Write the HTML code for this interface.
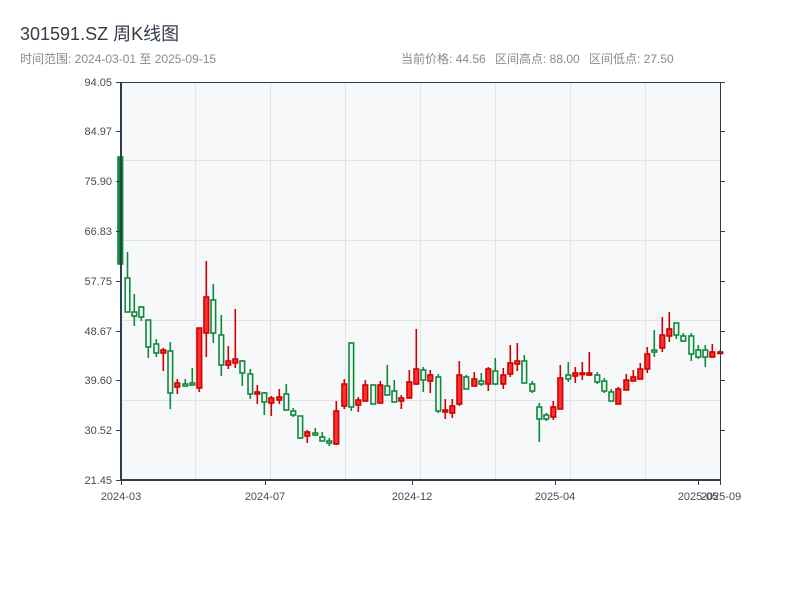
<!DOCTYPE html>
<html><head><meta charset="utf-8"><style>
html,body{margin:0;padding:0;background:#fff;width:800px;height:600px;overflow:hidden}
svg{display:block}
text{font-family:"Liberation Sans","Noto Sans CJK SC",sans-serif}
</style></head><body>
<svg width="800" height="600" xmlns="http://www.w3.org/2000/svg">
<text x="20" y="40" font-size="18" fill="#333d4a">301591.SZ 周K线图</text>
<text x="20" y="63" font-size="12" fill="#8a8a8a">时间范围: 2024-03-01 至 2025-09-15</text>
<text x="401" y="63" font-size="12" fill="#8a8a8a">当前价格: 44.56</text>
<text x="495" y="63" font-size="12" fill="#8a8a8a">区间高点: 88.00</text>
<text x="589" y="63" font-size="12" fill="#8a8a8a">区间低点: 27.50</text>
<rect x="121" y="82" width="599" height="398" fill="#f7f8fa"/>
<g stroke="#e0e3e8" stroke-width="1">
<line x1="195.5" y1="82" x2="195.5" y2="480"/><line x1="270.5" y1="82" x2="270.5" y2="480"/>
<line x1="345.5" y1="82" x2="345.5" y2="480"/><line x1="420.5" y1="82" x2="420.5" y2="480"/>
<line x1="495.5" y1="82" x2="495.5" y2="480"/><line x1="570.5" y1="82" x2="570.5" y2="480"/>
<line x1="645.5" y1="82" x2="645.5" y2="480"/>
<line x1="121" y1="160.5" x2="720" y2="160.5"/><line x1="121" y1="240.5" x2="720" y2="240.5"/>
<line x1="121" y1="320.5" x2="720" y2="320.5"/><line x1="121" y1="400.5" x2="720" y2="400.5"/>
</g>
<g stroke-width="1.6">
<g stroke="#0b8a3b" fill="#f7f8fa">
<line x1="120.3" y1="157" x2="120.3" y2="264"/><rect x="118" y="157" width="4.6" height="107" fill="#0b8a3b"/>
<line x1="127.5" y1="252" x2="127.5" y2="312"/><rect x="125.2" y="278" width="4.6" height="34"/>
<line x1="134.3" y1="294" x2="134.3" y2="326"/><rect x="132" y="312" width="4.6" height="4"/>
<line x1="141.3" y1="306" x2="141.3" y2="321"/><rect x="139" y="307" width="4.6" height="10"/>
<line x1="148.3" y1="320" x2="148.3" y2="358"/><rect x="146" y="320" width="4.6" height="27"/>
<line x1="156.3" y1="339" x2="156.3" y2="357"/><rect x="154" y="344" width="4.6" height="9"/>
<line x1="170.3" y1="342" x2="170.3" y2="409"/><rect x="168" y="351" width="4.6" height="42"/>
<line x1="185.3" y1="379" x2="185.3" y2="386"/><rect x="183" y="384" width="4.6" height="2"/>
<line x1="192.3" y1="368" x2="192.3" y2="385"/><rect x="190" y="383" width="4.6" height="2"/>
<line x1="213.3" y1="284" x2="213.3" y2="343"/><rect x="211" y="300" width="4.6" height="33"/>
<line x1="221.3" y1="315" x2="221.3" y2="376"/><rect x="219" y="335" width="4.6" height="30"/>
<line x1="242.3" y1="360" x2="242.3" y2="386"/><rect x="240" y="361" width="4.6" height="12"/>
<line x1="250.3" y1="369" x2="250.3" y2="399"/><rect x="248" y="374" width="4.6" height="20"/>
<line x1="264.3" y1="392" x2="264.3" y2="415"/><rect x="262" y="393" width="4.6" height="9"/>
<line x1="286.3" y1="384" x2="286.3" y2="410"/><rect x="284" y="394" width="4.6" height="16"/>
<line x1="293.3" y1="408" x2="293.3" y2="417"/><rect x="291" y="411" width="4.6" height="4"/>
<line x1="300.3" y1="416" x2="300.3" y2="439"/><rect x="298" y="416" width="4.6" height="22"/>
<line x1="315.3" y1="428" x2="315.3" y2="436"/><rect x="313" y="433" width="4.6" height="2"/>
<line x1="322.3" y1="432" x2="322.3" y2="441"/><rect x="320" y="437" width="4.6" height="4"/>
<line x1="329.3" y1="438" x2="329.3" y2="446"/><rect x="327" y="441" width="4.6" height="2"/>
<line x1="351.3" y1="343" x2="351.3" y2="411"/><rect x="349" y="343" width="4.6" height="64"/>
<line x1="373.3" y1="385" x2="373.3" y2="404"/><rect x="371" y="385" width="4.6" height="19"/>
<line x1="387.3" y1="365" x2="387.3" y2="395"/><rect x="385" y="386" width="4.6" height="9"/>
<line x1="394.3" y1="380" x2="394.3" y2="402"/><rect x="392" y="391" width="4.6" height="11"/>
<line x1="423.3" y1="367" x2="423.3" y2="392"/><rect x="421" y="370" width="4.6" height="10"/>
<line x1="438.3" y1="374" x2="438.3" y2="413"/><rect x="436" y="377" width="4.6" height="34"/>
<line x1="466.3" y1="375" x2="466.3" y2="389"/><rect x="464" y="377" width="4.6" height="12"/>
<line x1="481.3" y1="373" x2="481.3" y2="386"/><rect x="479" y="381" width="4.6" height="3"/>
<line x1="495.3" y1="358" x2="495.3" y2="385"/><rect x="493" y="371" width="4.6" height="13"/>
<line x1="524.3" y1="355" x2="524.3" y2="383"/><rect x="522" y="361" width="4.6" height="22"/>
<line x1="532.3" y1="381" x2="532.3" y2="393"/><rect x="530" y="384" width="4.6" height="7"/>
<line x1="539.3" y1="403" x2="539.3" y2="442"/><rect x="537" y="407" width="4.6" height="12"/>
<line x1="546.3" y1="413" x2="546.3" y2="421"/><rect x="544" y="415" width="4.6" height="4"/>
<line x1="568.3" y1="362" x2="568.3" y2="382"/><rect x="566" y="375" width="4.6" height="4"/>
<line x1="597.3" y1="372" x2="597.3" y2="384"/><rect x="595" y="375" width="4.6" height="7"/>
<line x1="604.3" y1="378" x2="604.3" y2="393"/><rect x="602" y="381" width="4.6" height="10"/>
<line x1="611.3" y1="389" x2="611.3" y2="401"/><rect x="609" y="392" width="4.6" height="9"/>
<line x1="654.3" y1="330" x2="654.3" y2="357"/><rect x="652" y="350" width="4.6" height="2"/>
<line x1="676.3" y1="323" x2="676.3" y2="339"/><rect x="674" y="323" width="4.6" height="12"/>
<line x1="683.3" y1="333" x2="683.3" y2="342"/><rect x="681" y="336" width="4.6" height="5"/>
<line x1="691.3" y1="333" x2="691.3" y2="361"/><rect x="689" y="336" width="4.6" height="18"/>
<line x1="698.3" y1="345" x2="698.3" y2="359"/><rect x="696" y="350" width="4.6" height="7"/>
<line x1="705.3" y1="345" x2="705.3" y2="367"/><rect x="703" y="350" width="4.6" height="7"/>
</g>
<g stroke="#d10000" fill="#ff3030">
<line x1="163.3" y1="348" x2="163.3" y2="371"/><rect x="161" y="350" width="4.6" height="3"/>
<line x1="177.3" y1="379" x2="177.3" y2="394"/><rect x="175" y="383" width="4.6" height="4"/>
<line x1="199.3" y1="328" x2="199.3" y2="392"/><rect x="197" y="328" width="4.6" height="60"/>
<line x1="206.3" y1="261" x2="206.3" y2="357"/><rect x="204" y="297" width="4.6" height="36"/>
<line x1="228.3" y1="346" x2="228.3" y2="369"/><rect x="226" y="361" width="4.6" height="4"/>
<line x1="235.3" y1="309" x2="235.3" y2="368"/><rect x="233" y="359" width="4.6" height="4"/>
<line x1="257.3" y1="385" x2="257.3" y2="404"/><rect x="255" y="392" width="4.6" height="2"/>
<line x1="271.3" y1="396" x2="271.3" y2="416"/><rect x="269" y="398" width="4.6" height="5"/>
<line x1="279.3" y1="389" x2="279.3" y2="404"/><rect x="277" y="397" width="4.6" height="3"/>
<line x1="307.3" y1="430" x2="307.3" y2="443"/><rect x="305" y="432" width="4.6" height="4"/>
<line x1="336.3" y1="401" x2="336.3" y2="445"/><rect x="334" y="411" width="4.6" height="33"/>
<line x1="344.3" y1="379" x2="344.3" y2="409"/><rect x="342" y="384" width="4.6" height="22"/>
<line x1="358.3" y1="397" x2="358.3" y2="412"/><rect x="356" y="400" width="4.6" height="5"/>
<line x1="365.3" y1="380" x2="365.3" y2="401"/><rect x="363" y="385" width="4.6" height="16"/>
<line x1="380.3" y1="381" x2="380.3" y2="403"/><rect x="378" y="385" width="4.6" height="18"/>
<line x1="401.3" y1="395" x2="401.3" y2="409"/><rect x="399" y="398" width="4.6" height="3"/>
<line x1="409.3" y1="370" x2="409.3" y2="398"/><rect x="407" y="382" width="4.6" height="16"/>
<line x1="416.3" y1="329" x2="416.3" y2="385"/><rect x="414" y="369" width="4.6" height="15"/>
<line x1="430.3" y1="370" x2="430.3" y2="393"/><rect x="428" y="375" width="4.6" height="6"/>
<line x1="445.3" y1="399" x2="445.3" y2="419"/><rect x="443" y="410" width="4.6" height="2"/>
<line x1="452.3" y1="399" x2="452.3" y2="418"/><rect x="450" y="406" width="4.6" height="7"/>
<line x1="459.3" y1="361" x2="459.3" y2="406"/><rect x="457" y="375" width="4.6" height="29"/>
<line x1="474.3" y1="372" x2="474.3" y2="386"/><rect x="472" y="379" width="4.6" height="7"/>
<line x1="488.3" y1="367" x2="488.3" y2="391"/><rect x="486" y="369" width="4.6" height="15"/>
<line x1="503.3" y1="368" x2="503.3" y2="389"/><rect x="501" y="375" width="4.6" height="9"/>
<line x1="510.3" y1="345" x2="510.3" y2="377"/><rect x="508" y="363" width="4.6" height="11"/>
<line x1="517.3" y1="343" x2="517.3" y2="371"/><rect x="515" y="361" width="4.6" height="3"/>
<line x1="553.3" y1="401" x2="553.3" y2="420"/><rect x="551" y="407" width="4.6" height="10"/>
<line x1="560.3" y1="365" x2="560.3" y2="409"/><rect x="558" y="378" width="4.6" height="31"/>
<line x1="575.3" y1="367" x2="575.3" y2="383"/><rect x="573" y="373" width="4.6" height="3"/>
<line x1="582.3" y1="362" x2="582.3" y2="380"/><rect x="580" y="373" width="4.6" height="1.5"/>
<line x1="589.3" y1="352" x2="589.3" y2="376"/><rect x="587" y="373" width="4.6" height="2"/>
<line x1="618.3" y1="387" x2="618.3" y2="404"/><rect x="616" y="389" width="4.6" height="15"/>
<line x1="626.3" y1="374" x2="626.3" y2="390"/><rect x="624" y="380" width="4.6" height="10"/>
<line x1="633.3" y1="370" x2="633.3" y2="381"/><rect x="631" y="377" width="4.6" height="4"/>
<line x1="640.3" y1="363" x2="640.3" y2="379"/><rect x="638" y="369" width="4.6" height="10"/>
<line x1="647.3" y1="347" x2="647.3" y2="373"/><rect x="645" y="354" width="4.6" height="15"/>
<line x1="662.3" y1="317" x2="662.3" y2="352"/><rect x="660" y="335" width="4.6" height="13"/>
<line x1="669.3" y1="312" x2="669.3" y2="342"/><rect x="667" y="329" width="4.6" height="7"/>
<line x1="712.3" y1="344" x2="712.3" y2="357"/><rect x="710" y="352" width="4.6" height="5"/>
<line x1="720.3" y1="350" x2="720.3" y2="354"/><rect x="718" y="352" width="4.6" height="1.5"/>
</g>
</g>
<g stroke="#2d3e50" fill="none">
<line x1="121" y1="82" x2="121" y2="481" stroke-width="2"/>
<line x1="120" y1="480" x2="721" y2="480" stroke-width="2"/>
<line x1="121" y1="82.5" x2="720" y2="82.5" stroke-width="1"/>
<line x1="720.5" y1="82" x2="720.5" y2="481" stroke-width="1"/>
<path d="M116 82.5H121M116 131.5H121M116 181.5H121M116 231.5H121M116 281.5H121M116 331.5H121M116 380.5H121M116 430.5H121M116 480.5H121" stroke-width="1"/>
<path d="M720 82.5H725M720 131.5H725M720 181.5H725M720 231.5H725M720 281.5H725M720 331.5H725M720 380.5H725M720 430.5H725" stroke-width="1"/>
<path d="M121.5 480V485M265.5 480V485M412.5 480V485M555.5 480V485M698.5 480V485M720.5 480V485" stroke-width="1"/>
</g>
<g font-size="11" fill="#444c56" text-anchor="end">
<text x="112" y="86">94.05</text><text x="112" y="135">84.97</text><text x="112" y="185">75.90</text>
<text x="112" y="235">66.83</text><text x="112" y="285">57.75</text><text x="112" y="335">48.67</text>
<text x="112" y="384">39.60</text><text x="112" y="434">30.52</text><text x="112" y="484">21.45</text>
</g>
<g font-size="11" fill="#444c56" text-anchor="middle">
<text x="121" y="500">2024-03</text><text x="265" y="500">2024-07</text><text x="412" y="500">2024-12</text>
<text x="555" y="500">2025-04</text><text x="698" y="500">2025-05</text><text x="721" y="500">2025-09</text>
</g>
</svg>
</body></html>
